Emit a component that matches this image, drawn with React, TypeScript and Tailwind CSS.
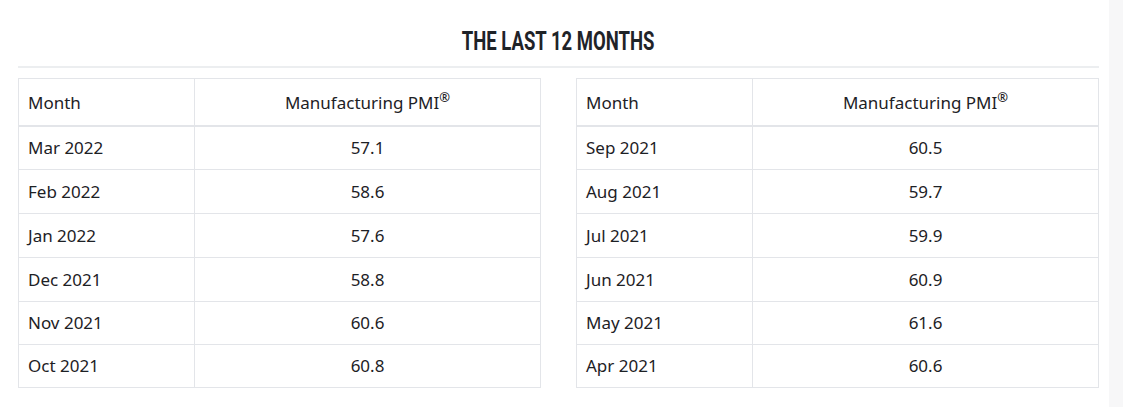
import React from "react";

const left = [
  ["Mar 2022", "57.1"],
  ["Feb 2022", "58.6"],
  ["Jan 2022", "57.6"],
  ["Dec 2021", "58.8"],
  ["Nov 2021", "60.6"],
  ["Oct 2021", "60.8"],
];
const right = [
  ["Sep 2021", "60.5"],
  ["Aug 2021", "59.7"],
  ["Jul 2021", "59.9"],
  ["Jun 2021", "60.9"],
  ["May 2021", "61.6"],
  ["Apr 2021", "60.6"],
];

function PmiTable({ rows }: { rows: string[][] }) {
  return (
    <table className="w-[523px] border-collapse border border-[#e3e5e9] text-[17px] text-[#1d2125]">
      <thead>
        <tr className="h-[47px]">
          <th className="w-[176px] border border-b-2 border-[#e3e5e9] pl-[9px] pt-[2px] text-left font-normal">Month</th>
          <th className="border border-b-2 border-[#e3e5e9] pt-[2px] text-center font-normal">
            Manufacturing PMI<sup className="-top-[0.55em] text-[13px] font-semibold">®</sup>
          </th>
        </tr>
      </thead>
      <tbody>
        {rows.map(([m, v], i) => (
          <tr key={m} className={i < 4 ? "h-[44px]" : "h-[43px]"}>
            <td className="border border-[#e3e5e9] pl-[9px]">{m}</td>
            <td className="border border-[#e3e5e9] text-center">{v}</td>
          </tr>
        ))}
      </tbody>
    </table>
  );
}

export default function App() {
  return (
    <div className="flex h-[407px] w-[1123px] bg-white" style={{ fontFamily: '"Noto Sans", "Open Sans", sans-serif' }}>
      <div className="flex-1 pl-[18px] pr-[10px]">
        <div className="mt-[28px] flex h-[28px] justify-center">
          <h2
            className="scale-x-[0.74] whitespace-nowrap text-[25px] font-bold leading-[28px] text-[#1f2328]"
            style={{ fontFamily: 'Roboto, "DejaVu Sans", sans-serif' }}
          >
            THE LAST 12 MONTHS
          </h2>
        </div>
        <div className="mt-[10px] h-[2px] bg-[#eceef0]" />
        <div className="mt-[10px] flex justify-between">
          <PmiTable rows={left} />
          <PmiTable rows={right} />
        </div>
      </div>
      <div className="w-[14px] bg-[#f7f7f8]" />
    </div>
  );
}
